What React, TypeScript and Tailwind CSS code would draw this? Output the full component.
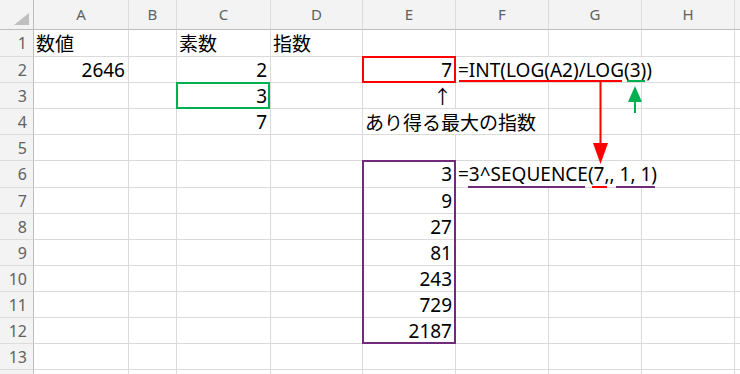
import React from 'react';

type Cell = { text: string; align?: 'left' | 'right'; jp?: boolean };

const COLS = ['A', 'B', 'C', 'D', 'E', 'F', 'G', 'H', ''];
const COL_W = [95, 48, 94, 92, 93, 93, 93, 93, 60];
const ROW_H = [27, 26, 26, 26, 26, 27, 26, 26, 26, 26, 26, 26, 26, 26];

// row number -> column index -> cell
const data: Record<number, Record<number, Cell>> = {
  1: { 0: { text: '数値', jp: true }, 2: { text: '素数', jp: true }, 3: { text: '指数', jp: true } },
  2: {
    0: { text: '2646', align: 'right' },
    2: { text: '2', align: 'right' },
    4: { text: '7', align: 'right' },
    5: { text: '=INT(LOG(A2)/LOG(3))' },
  },
  3: { 2: { text: '3', align: 'right' }, 4: { text: '↑', align: 'right', jp: true } },
  4: { 2: { text: '7', align: 'right' }, 4: { text: 'あり得る最大の指数', jp: true } },
  6: { 4: { text: '3', align: 'right' }, 5: { text: '=3^SEQUENCE(7,, 1, 1)' } },
  7: { 4: { text: '9', align: 'right' } },
  8: { 4: { text: '27', align: 'right' } },
  9: { 4: { text: '81', align: 'right' } },
  10: { 4: { text: '243', align: 'right' } },
  11: { 4: { text: '729', align: 'right' } },
  12: { 4: { text: '2187', align: 'right' } },
};

// cells whose right gridline is hidden by overflowing text
const noRight: Record<number, number[]> = { 2: [5, 6], 4: [4], 6: [5, 6] };

const latin = { fontFamily: '"Noto Sans", "Noto Sans CJK JP", sans-serif' };
const jpFont = { fontFamily: '"Noto Sans CJK JP", "Noto Sans", sans-serif' };

const App: React.FC = () => {
  return (
    <div className="relative w-[740px] h-[374px] overflow-hidden bg-white text-black">
      {/* column header */}
      <div className="flex h-[30px]">
        <div className="w-[34px] h-[30px] shrink-0 bg-[#f3f3f3] border-r border-b border-[#bdbdbd] flex items-end justify-end pr-[4px] pb-[4px]">
          <svg width="15" height="12" viewBox="0 0 15 12">
            <polygon points="15,0 15,12 0,12" fill="#bfbfbf" />
          </svg>
        </div>
        {COLS.map((c, i) => (
          <div
            key={i}
            style={{ width: COL_W[i], ...latin }}
            className="h-[30px] shrink-0 bg-[#f3f3f3] border-r border-r-[#dcdcdc] border-b border-b-[#bdbdbd] flex items-center justify-center text-[15px] text-[#616161]"
          >
            {c}
          </div>
        ))}
      </div>

      {ROW_H.map((h, r) => {
        const row = r + 1;
        return (
          <div key={row} className="flex" style={{ height: h }}>
            <div
              style={latin}
              className="w-[34px] shrink-0 bg-[#f3f3f3] border-r border-r-[#bdbdbd] border-b border-b-[#dcdcdc] flex items-center justify-end pr-[6px] text-[16px] text-[#616161]"
            >
              {row <= 13 ? row : ''}
            </div>
            {COLS.map((c, i) => {
              const cell = data[row]?.[i];
              const hideRight = noRight[row]?.includes(i);
              return (
                <div
                  key={i}
                  style={{ width: COL_W[i] }}
                  className={`shrink-0 flex items-start overflow-visible border-b border-[#dadada] pl-[2px] pr-[3px] ${
                    hideRight ? '' : 'border-r'
                  } ${cell?.align === 'right' ? 'justify-end' : 'justify-start'}`}
                >
                  {cell && (
                    <span style={cell.jp ? jpFont : latin} className="shrink-0 whitespace-nowrap text-[19px] leading-[26px]">
                      {cell.text}
                    </span>
                  )}
                </div>
              );
            })}
          </div>
        );
      })}

      {/* highlighted ranges */}
      <div className="absolute left-[362px] top-[56px] w-[94px] h-[27px] border-2 border-[#ff0000]" />
      <div className="absolute left-[176px] top-[82px] w-[94px] h-[27px] border-2 border-[#00b050]" />
      <div className="absolute left-[362px] top-[160px] w-[94px] h-[184px] border-2 border-[#722a7a]" />

      {/* annotation marks */}
      <svg className="absolute inset-0 pointer-events-none" width="740" height="374" viewBox="0 0 740 374">
        <rect x="459" y="80" width="163" height="2" fill="#ff0000" />
        <rect x="627" y="80" width="18" height="2" fill="#00b050" />
        <rect x="599.5" y="81" width="2" height="64" fill="#ff0000" />
        <polygon points="593,143 608,143 600.5,164" fill="#ff0000" />
        <polygon points="628,102 642,102 635,86" fill="#00b050" />
        <rect x="634" y="101" width="2" height="12" fill="#00b050" />
        <rect x="468" y="186" width="117" height="2" fill="#722a7a" />
        <rect x="592" y="186" width="15" height="2" fill="#ff0000" />
        <rect x="616" y="186" width="39" height="2" fill="#722a7a" />
      </svg>
    </div>
  );
};

export default App;
